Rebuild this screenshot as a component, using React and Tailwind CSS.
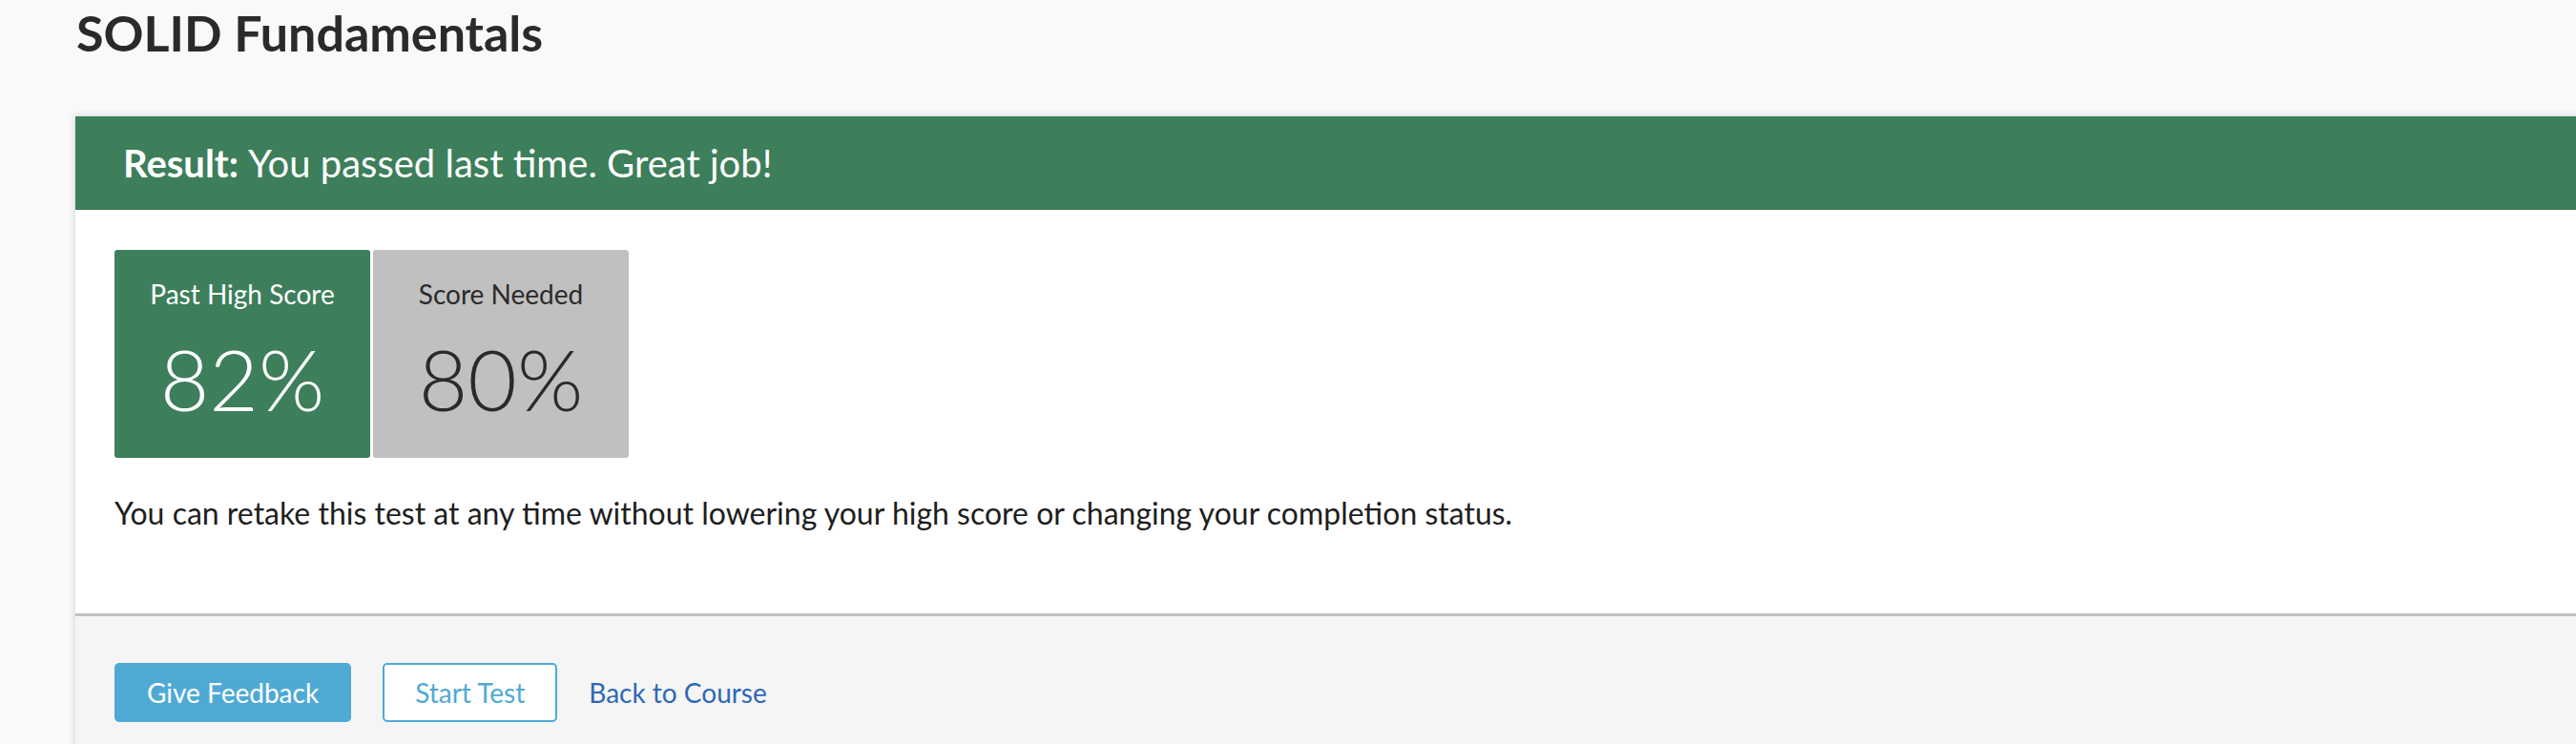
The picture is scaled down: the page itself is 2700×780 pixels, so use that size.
export default function App() {
  return (
    <div className="min-h-[780px] bg-[#f8f9fb] overflow-hidden" style={{ fontFamily: 'Lato, "Noto Sans", sans-serif' }}>
      <div className="pl-[80px]">
        <h1 className="text-[52px] font-bold text-[#2a2a2a] leading-[68px]">SOLID Fundamentals</h1>
      </div>
      <div className="pl-[79px] mt-[54px]">
        <div className="w-[2700px] bg-white shadow-[0_0_8px_rgba(0,0,0,0.18)]">
          <div className="h-[98px] bg-[#3d7e5b] flex items-center pl-[50px] text-white text-[40px]">
            <span className="font-bold">Result:</span>
            <span className="ml-[10px]">You passed last time. Great job!</span>
          </div>
          <div className="px-[41px] pt-[42px] pb-[86px]">
            <div className="flex gap-[3px]">
              <div className="w-[268px] h-[218px] bg-[#3d7e5b] rounded-[3px] text-white flex flex-col items-center pt-[29px]">
                <div className="text-[28px] leading-[34px]">Past High Score</div>
                <div className="text-[89px] font-light leading-[100px] mt-[22px]">82%</div>
              </div>
              <div className="w-[268px] h-[218px] bg-[#c0c0c0] rounded-[3px] text-[#2a2a2a] flex flex-col items-center pt-[29px]">
                <div className="text-[28px] leading-[34px]">Score Needed</div>
                <div className="text-[89px] font-light leading-[100px] mt-[22px]">80%</div>
              </div>
            </div>
            <p className="mt-[39px] text-[32px] leading-[38px] text-[#1e1e1e]">
              You can retake this test at any time without lowering your high score or changing your completion status.
            </p>
          </div>
          <div className="border-t-[3px] border-[#c0c0c0] bg-[#f5f5f5] h-[200px] px-[41px] pt-[49px]">
            <div className="flex items-center gap-[33px]">
              <button className="h-[62px] px-[34px] bg-[#4eaad5] text-white text-[28px] rounded-[5px]">Give Feedback</button>
              <button className="h-[62px] px-[32px] bg-white border-2 border-[#4eaad5] text-[#4eaad5] text-[28px] rounded-[5px]">Start Test</button>
              <a className="text-[28px] text-[#2e68b6]" href="#">Back to Course</a>
            </div>
          </div>
        </div>
      </div>
    </div>
  );
}
